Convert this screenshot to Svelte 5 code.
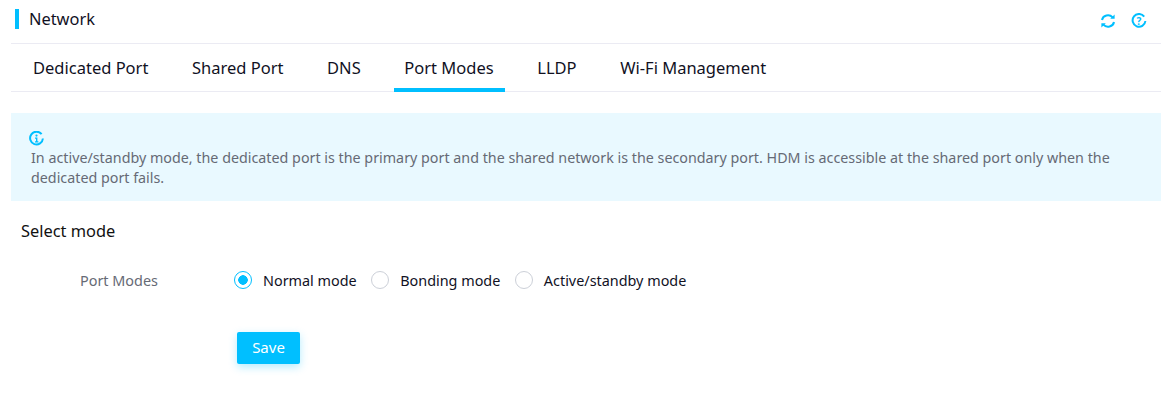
<script>
  const tabs = ["Dedicated Port", "Shared Port", "DNS", "Port Modes", "LLDP", "Wi-Fi Management"];
  const modes = ["Normal mode", "Bonding mode", "Active/standby mode"];

  let activeTab = $state("Port Modes");
  let mode = $state("Normal mode");
</script>

<div class="page">
  <header class="head">
    <h1 class="title">Network</h1>
    <div class="tools">
      <svg width="16" height="16" viewBox="0 0 16 16" fill="none" stroke="#00bfff" stroke-width="2">
        <path d="M2 7a6 5.6 0 0 1 10.6-2.6" />
        <path d="M14 9a6 5.6 0 0 1-10.6 2.6" />
        <path d="M14.6 1.4v4.4h-4.4z" fill="#00bfff" stroke="none" />
        <path d="M1.4 14.6v-4.4h4.4z" fill="#00bfff" stroke="none" />
      </svg>
      <svg width="16" height="16" viewBox="0 0 16 16" fill="none">
        <path d="M13.2 3.6A6.4 6.4 0 1 0 14.4 8" stroke="#00bfff" stroke-width="2" />
        <text x="8" y="11.8" text-anchor="middle" class="qmark">?</text>
      </svg>
    </div>
  </header>

  <nav class="tabs">
    {#each tabs as tab}
      <button class="tab" class:active={tab === activeTab} onclick={() => (activeTab = tab)}>{tab}</button>
    {/each}
  </nav>

  <section class="notice">
    <svg class="notice-icon" width="15" height="15" viewBox="0 0 15 15" fill="none">
      <path d="M12.6 3.2A6.4 6.4 0 1 0 13.9 7.5" stroke="#00bfff" stroke-width="2" />
      <circle cx="7.5" cy="4.6" r="1.1" fill="#00bfff" />
      <path d="M6 6.6h2.4v3.6h1v1.2H6v-1.2h1V7.8H6z" fill="#00bfff" />
    </svg>
    <p>In active/standby mode, the dedicated port is the primary port and the shared network is the secondary port. HDM is accessible at the shared port only when the dedicated port fails.</p>
  </section>

  <h2 class="subtitle">Select mode</h2>

  <div class="field">
    <span class="label">Port Modes</span>
    <div class="radios">
      {#each modes as m}
        <label class="radio">
          <input type="radio" name="mode" value={m} bind:group={mode} />
          <span class="dot"></span>
          <span>{m}</span>
        </label>
      {/each}
    </div>
  </div>

  <button class="save">Save</button>
</div>

<style>
  :global(body) {
    margin: 0;
    background: #fff;
  }

  .page {
    height: 417px;
    padding: 0 8px 0 11px;
    box-sizing: border-box;
    font-family: "Noto Sans", "Open Sans", sans-serif;
    color: #11111f;
    overflow: hidden;
  }

  .head {
    height: 44px;
    box-sizing: border-box;
    display: flex;
    align-items: flex-start;
    justify-content: space-between;
    border-bottom: 1px solid #ebebf3;
  }

  .title {
    margin: 9px 0 0 4px;
    padding: 0 0 0 10px;
    height: 20px;
    box-sizing: border-box;
    line-height: 20px;
    border-left: 4px solid #00bfff;
    font-size: 16.4px;
    font-weight: 400;
  }

  .tools {
    display: flex;
    gap: 15px;
    margin: 13px 14px 0 0;
  }

  .qmark {
    font-size: 10px;
    font-weight: 700;
    fill: #00bfff;
  }

  .tabs {
    height: 48px;
    box-sizing: border-box;
    display: flex;
    border-bottom: 1px solid #ebebf3;
  }

  .tab {
    height: 48px;
    padding: 3px 11px 0 10px;
    margin: 0 22.6px 0 0;
    background: none;
    border: 0;
    border-bottom: 4px solid transparent;
    font: inherit;
    font-size: 16.5px;
    color: inherit;
    cursor: pointer;
    box-sizing: border-box;
  }

  .tab:first-child {
    margin-left: 12px;
  }

  .tab.active {
    border-bottom-color: #00bfff;
  }

  .notice {
    margin-top: 21px;
    height: 88px;
    box-sizing: border-box;
    padding: 18px 20px 0;
    background: #e9f9ff;
  }

  .notice-icon {
    display: block;
    margin-left: -2px;
  }

  .notice p {
    margin: 2px 0 0;
    font-size: 14.3px;
    line-height: 20px;
    color: #666a75;
  }

  .subtitle {
    margin: 20px 0 0 10px;
    font-size: 16.4px;
    font-weight: 400;
    line-height: 20px;
    color: #111;
  }

  .field {
    display: flex;
    align-items: center;
    margin-top: 29px;
    height: 20px;
  }

  .label {
    width: 223px;
    padding-left: 69px;
    box-sizing: border-box;
    font-size: 14.4px;
    color: #666a75;
  }

  .radios {
    display: flex;
    gap: 14.5px;
  }

  .radio {
    display: flex;
    align-items: center;
    gap: 11px;
    font-size: 14.4px;
    cursor: pointer;
  }

  .radio input {
    display: none;
  }

  .dot {
    width: 18px;
    height: 18px;
    box-sizing: border-box;
    border: 1px solid #ccd0d8;
    border-radius: 50%;
    background: #fff;
  }

  .radio input:checked + .dot {
    border-color: #00bfff;
    background: radial-gradient(circle, #00bfff 0 4.5px, #fff 5px);
  }

  .save {
    display: block;
    width: 63px;
    height: 32px;
    margin: 42px 0 0 226px;
    padding: 0 0 2px;
    border: 0;
    border-radius: 2px;
    background: #00bfff;
    box-shadow: 0 3px 8px rgba(0, 191, 255, 0.3);
    color: #fff;
    font: inherit;
    font-size: 15px;
    cursor: pointer;
  }
</style>
